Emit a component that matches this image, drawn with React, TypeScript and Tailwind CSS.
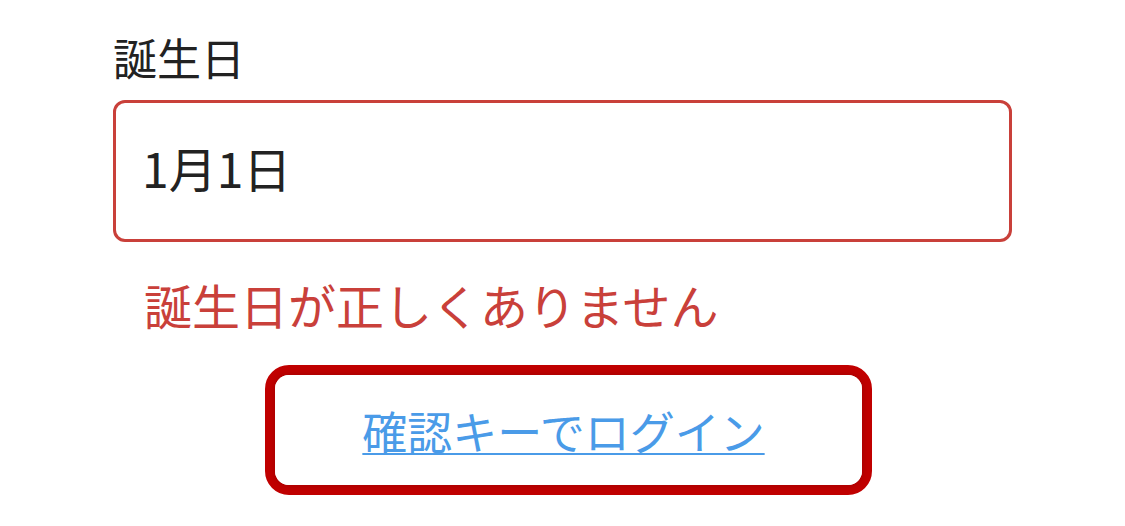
export default function App() {
  return (
    <div
      className="w-[1125px] h-[526px] bg-white overflow-hidden"
      style={{ fontFamily: '"Noto Sans CJK JP", "Noto Sans", sans-serif' }}
    >
      <div className="pl-[113px] pt-[29px] w-[1012px]">
        <label className="block text-[44px] leading-[56px] text-[#222222]">誕生日</label>

        <div className="mt-[15px] h-[142px] w-[899px] border-[3px] border-[#c9403a] rounded-[12px] flex items-center pl-[26px] pb-[8px]">
          <span className="text-[48px] leading-none text-[#222222]">1月1日</span>
        </div>

        <p className="mt-[32px] ml-[31px] text-[48px] leading-[60px] text-[#c9403a]">
          誕生日が正しくありません
        </p>

        {/* login-by-key button, outlined */}
        <div className="mt-[31px] ml-[152px] w-[607px] h-[130px] border-[10px] border-[#c00000] rounded-[24px]">
          <button className="w-full h-full bg-white rounded-[14px] shadow-[0_0_6px_rgba(0,0,0,0.18)] flex items-center justify-center pr-[10px]">
            <span className="text-[45px] leading-none text-[#4a9be8] underline underline-offset-[3px] decoration-[2px]">
              確認キーでログイン
            </span>
          </button>
        </div>
      </div>
    </div>
  )
}
